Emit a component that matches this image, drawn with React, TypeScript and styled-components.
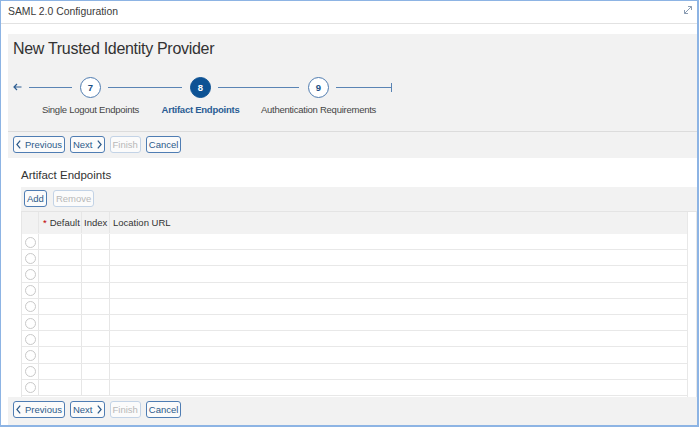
import React from "react";
import styled, { createGlobalStyle } from "styled-components";

const GlobalStyle = createGlobalStyle`
  html, body { margin: 0; padding: 0; background: #ffffff; }
  body { font-family: "Liberation Sans", Arial, sans-serif; color: #333333; }
  * { box-sizing: border-box; }
`;

const Window = styled.div`
  width: 699px;
  height: 427px;
  border: 1px solid #8db4e4;
  border-right-width: 2px;
  border-bottom-width: 2px;
  background: #ffffff;
  display: flex;
  flex-direction: column;
  overflow: hidden;
`;

const TitleBar = styled.div`
  height: 23px;
  flex: none;
  display: flex;
  align-items: center;
  justify-content: space-between;
  padding: 0 4px 1px 7px;
  border-bottom: 1px solid #e2e2e2;
  font-size: 10.4px;
  color: #3a3a3a;
`;

const ExpandIcon = styled.svg`
  width: 10px;
  height: 10px;
  margin-top: -4px;
`;

const Body = styled.div`
  flex: 1;
  display: flex;
  flex-direction: column;
  padding: 10px 0 0 7px;
  min-height: 0;
`;

const WizardHeader = styled.div`
  background: #f2f2f2;
  padding: 5px 0 16px 5px;
  border-bottom: 1px solid #dcdcdc;
  flex: none;
`;

const PageTitle = styled.div`
  font-size: 16px;
  line-height: 20px;
  letter-spacing: -0.3px;
  color: #333333;
  margin-bottom: 18px;
`;

const Track = styled.div`
  display: flex;
  align-items: flex-start;
  height: 38px;
`;

const BackArrow = styled.svg`
  width: 9px;
  height: 8px;
  margin-top: 6px;
  flex: none;
`;

const Line = styled.div<{ $w: number; $gap: number }>`
  width: ${(p) => p.$w}px;
  height: 1px;
  background: #5a84b4;
  margin: 10px ${(p) => p.$gap}px 0 7px;
  flex: none;
`;

const EndLine = styled.div<{ $w: number }>`
  width: ${(p) => p.$w}px;
  height: 9px;
  margin: 6px 0 0 7px;
  border-right: 1px solid #5a84b4;
  flex: none;
  display: flex;
  align-items: center;
  &::before {
    content: "";
    flex: 1;
    height: 1px;
    background: #5a84b4;
  }
`;

const Step = styled.div`
  width: 21px;
  display: flex;
  flex-direction: column;
  align-items: center;
  flex: none;
`;

const Circle = styled.div<{ $active?: boolean }>`
  width: 21px;
  height: 21px;
  border-radius: 50%;
  border: 1px solid ${(p) => (p.$active ? "#0d5294" : "#4f7cb0")};
  background: ${(p) => (p.$active ? "#0d5294" : "#ffffff")};
  color: ${(p) => (p.$active ? "#ffffff" : "#1b4f84")};
  font-size: 9.5px;
  font-weight: bold;
  display: flex;
  align-items: center;
  justify-content: center;
`;

const StepLabel = styled.div<{ $active?: boolean }>`
  margin-top: 6px;
  white-space: nowrap;
  font-size: 9.5px;
  line-height: 12px;
  letter-spacing: -0.25px;
  font-weight: ${(p) => (p.$active ? "bold" : "normal")};
  color: ${(p) => (p.$active ? "#2a5d94" : "#454545")};
`;

const ButtonBar = styled.div<{ $h: number }>`
  height: ${(p) => p.$h}px;
  background: #f2f2f2;
  display: flex;
  align-items: flex-start;
  padding: 4px 5px 0;
  gap: 5px;
  flex: none;
`;

const Btn = styled.button`
  height: 17px;
  padding: 0 2px;
  border: 1px solid #4f7db3;
  border-radius: 3px;
  background: #fbfbfb;
  color: #2c5a8a;
  font-family: "Liberation Sans", Arial, sans-serif;
  font-size: 9.5px;
  display: flex;
  align-items: center;
  gap: 4px;
  cursor: pointer;
  &:disabled {
    border-color: #c3d3e6;
    color: #b8b8b8;
    cursor: default;
  }
`;

const Chevron = styled.svg`
  width: 5px;
  height: 9px;
`;

const Content = styled.div`
  flex: 1;
  display: flex;
  flex-direction: column;
  padding: 10px 0 0 13px;
  min-height: 0;
`;

const SectionTitle = styled.div`
  font-size: 11.5px;
  line-height: 14px;
  color: #333333;
  margin-bottom: 5px;
`;

const TableToolbar = styled.div`
  height: 25px;
  background: #f2f2f2;
  border-bottom: 1px solid #e4e4e4;
  display: flex;
  align-items: center;
  padding: 0 0 1px 3px;
  gap: 6px;
  flex: none;
`;

const TableWrap = styled.div`
  flex: 1;
  display: flex;
  min-height: 0;
`;

const Table = styled.div`
  flex: 1;
  border-left: 1px solid #e6e6e6;
  display: flex;
  flex-direction: column;
`;

const Scrollbar = styled.div`
  width: 10px;
  border-left: 1px solid #e8e8e8;
  border-right: 1px solid #e8e8e8;
  background: #ffffff;
  flex: none;
`;

const Row = styled.div<{ $header?: boolean }>`
  display: grid;
  grid-template-columns: 17px 43px 28px 1fr;
  height: ${(p) => (p.$header ? "22px" : "16.2px")};
  background: ${(p) => (p.$header ? "#f2f2f2" : "#ffffff")};
  border-bottom: 1px solid ${(p) => (p.$header ? "#f2f2f2" : "#e8e8e8")};
  flex: none;
`;

const Cell = styled.div<{ $pad?: number; $last?: boolean }>`
  display: flex;
  align-items: center;
  justify-content: ${(p) => (p.$pad === undefined ? "center" : "flex-start")};
  padding-left: ${(p) => p.$pad ?? 0}px;
  border-right: ${(p) => (p.$last ? "none" : "1px solid #e6e6e6")};
  font-size: 9.5px;
  color: #333333;
  white-space: nowrap;
`;

const Required = styled.span`
  color: #c00000;
  margin-right: 3px;
`;

const Radio = styled.span`
  width: 11px;
  height: 11px;
  border-radius: 50%;
  border: 1px solid #c9c9c9;
  background: #ffffff;
  margin-top: 1px;
`;

const Prev = () => (
  <Chevron viewBox="0 0 5 9">
    <path d="M4.2 0.6 L0.9 4.5 L4.2 8.4" fill="none" stroke="currentColor" strokeWidth="1.2" />
  </Chevron>
);
const Next = () => (
  <Chevron viewBox="0 0 5 9">
    <path d="M0.8 0.6 L4.1 4.5 L0.8 8.4" fill="none" stroke="currentColor" strokeWidth="1.2" />
  </Chevron>
);

const NavButtons = () => (
  <>
    <Btn>
      <Prev />
      Previous
    </Btn>
    <Btn>
      Next
      <Next />
    </Btn>
    <Btn disabled>Finish</Btn>
    <Btn>Cancel</Btn>
  </>
);

const rows = Array.from({ length: 10 }, (_, i) => i);

export default function App() {
  return (
    <>
      <GlobalStyle />
      <Window>
        <TitleBar>
          <span>SAML 2.0 Configuration</span>
          <ExpandIcon viewBox="0 0 10 10">
            <path
              d="M1.5 8.5 L8.5 1.5 M5 1.5 H8.5 V5 M1.5 5 V8.5 H5"
              fill="none"
              stroke="#8a9cb3"
              strokeWidth="1"
            />
          </ExpandIcon>
        </TitleBar>
        <Body>
          <WizardHeader>
            <PageTitle>New Trusted Identity Provider</PageTitle>
            <Track>
              <BackArrow viewBox="0 0 9 8">
                <path d="M8.5 4 H1 M4 1 L1 4 L4 7" fill="none" stroke="#2f5f93" strokeWidth="1.2" />
              </BackArrow>
              <Line $w={43} $gap={8} />
              <Step>
                <Circle>7</Circle>
                <StepLabel>Single Logout Endpoints</StepLabel>
              </Step>
              <Line $w={74} $gap={8} />
              <Step>
                <Circle $active>8</Circle>
                <StepLabel $active>Artifact Endpoints</StepLabel>
              </Step>
              <Line $w={81} $gap={9} />
              <Step>
                <Circle>9</Circle>
                <StepLabel>Authentication Requirements</StepLabel>
              </Step>
              <EndLine $w={56} />
            </Track>
          </WizardHeader>
          <ButtonBar $h={26}>
            <NavButtons />
          </ButtonBar>
          <Content>
            <SectionTitle>Artifact Endpoints</SectionTitle>
            <TableToolbar>
              <Btn>Add</Btn>
              <Btn disabled>Remove</Btn>
            </TableToolbar>
            <TableWrap>
              <Table>
                <Row $header>
                  <Cell />
                  <Cell $pad={4}>
                    <Required>*</Required>Default
                  </Cell>
                  <Cell $pad={2}>Index</Cell>
                  <Cell $pad={3} $last>
                    Location URL
                  </Cell>
                </Row>
                {rows.map((r) => (
                  <Row key={r}>
                    <Cell>
                      <Radio />
                    </Cell>
                    <Cell $pad={4} />
                    <Cell $pad={2} />
                    <Cell $pad={3} $last />
                  </Row>
                ))}
              </Table>
              <Scrollbar />
            </TableWrap>
          </Content>
          <ButtonBar $h={28}>
            <NavButtons />
          </ButtonBar>
        </Body>
      </Window>
    </>
  );
}
